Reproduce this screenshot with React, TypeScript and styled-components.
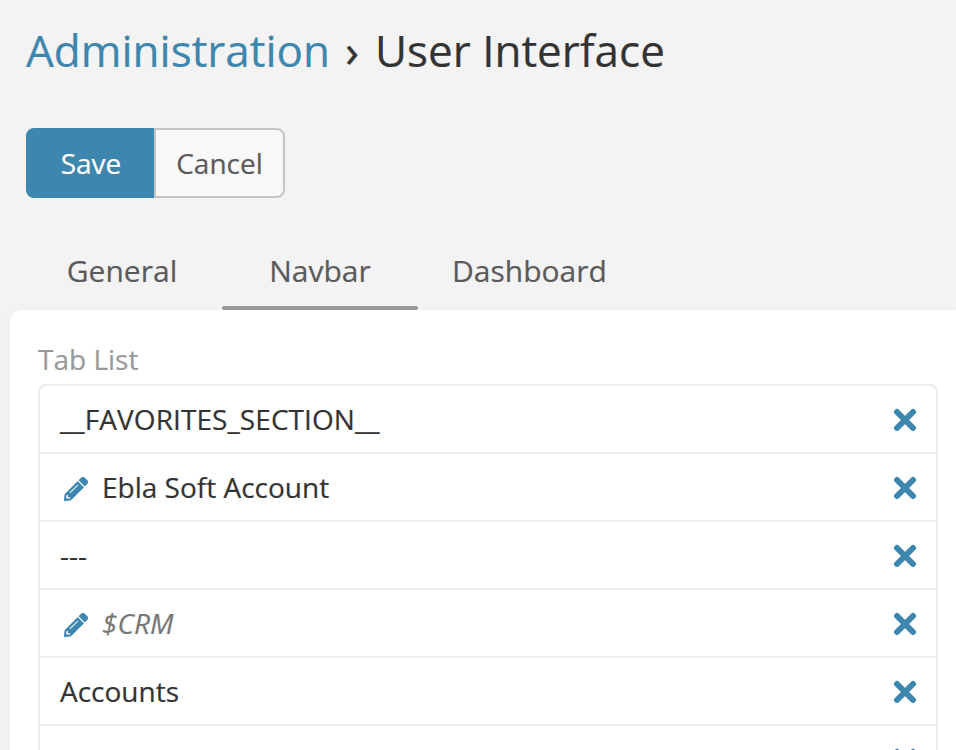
import React from 'react';
import styled, { createGlobalStyle } from 'styled-components';
import { FaPencilAlt } from 'react-icons/fa';

const GlobalStyle = createGlobalStyle`
  *, *::before, *::after { box-sizing: border-box; }
  html, body { margin: 0; height: 100%; overflow: hidden; }
  body {
    background: #f3f3f3;
    color: #333;
    font-family: 'Open Sans', sans-serif;
    font-size: 28px;
    line-height: 40px;
    -webkit-text-stroke: 0.2px currentColor;
  }
`;

const Page = styled.div`
  height: 750px;
  overflow: hidden;
  display: flex;
  flex-direction: column;
`;

const Title = styled.h1`
  flex: none;
  margin: 19px 0 0 26px;
  height: 63px;
  display: flex;
  font-size: 44px;
  font-weight: 400;
  line-height: 62px;
  white-space: pre;
`;

const Crumb = styled.a`
  color: #3d86ad;
  width: 303px;
`;

const Chevron = styled.span`
  width: 46px;
  text-align: center;
  -webkit-text-stroke-width: 0.6px;
`;

const Current = styled.span``;

const ButtonGroup = styled.div`
  flex: none;
  display: flex;
  margin: 46px 0 0 26px;
`;

const Button = styled.button<{ $primary?: boolean }>`
  width: ${(p) => (p.$primary ? 128 : 131)}px;
  height: 70px;
  padding: ${(p) => (p.$primary ? '0 0 0 2px' : '0')};
  font: inherit;
  color: ${(p) => (p.$primary ? '#fff' : '#5a5a5a')};
  background: ${(p) => (p.$primary ? '#3d86ad' : '#f8f8f8')};
  border: 2px solid ${(p) => (p.$primary ? '#3d86ad' : '#c5c5c5')};
  border-radius: ${(p) => (p.$primary ? '8px 0 0 8px' : '0 8px 8px 0')};
`;

const Tabs = styled.div`
  flex: none;
  display: flex;
  gap: 2px;
  margin: 36px 0 0 24px;
`;

const Tab = styled.div<{ $active?: boolean }>`
  min-width: 196px;
  height: 76px;
  padding: 16px 32px 0;
  font-size: 30px;
  line-height: 42px;
  text-align: center;
  color: #5a5a5a;
  position: relative;

  &::after {
    content: '';
    display: ${(p) => (p.$active ? 'block' : 'none')};
    position: absolute;
    inset: auto 0 0 0;
    height: 4px;
    border-radius: 2px;
    background: #999;
  }
`;

const Panel = styled.section`
  flex: 1 0 440px;
  margin-left: 10px;
  padding: 29px 18px 0 28px;
  background: #fff;
  border-top-left-radius: 12px;
  box-shadow: 0 0 6px rgba(0, 0, 0, 0.03);
`;

const Label = styled.div`
  color: #999;
  height: 45px;
`;

const List = styled.ul`
  list-style: none;
  margin: 0;
  padding: 0;
  width: 900px;
  border: 2px solid #e8eded;
  border-radius: 8px;
`;

const Row = styled.li`
  display: flex;
  align-items: center;
  height: 68px;
  padding: 0 19px 0 20px;
  border-bottom: 2px solid #e8eded;
`;

const Pencil = styled(FaPencilAlt)`
  width: 24px;
  height: 24px;
  margin: 4px 14px 0 4px;
  color: #3d86ad;
  stroke-width: 10;
`;

const Name = styled.span<{ $group?: boolean; $constant?: boolean }>`
  flex: 1;
  color: ${(p) => (p.$group ? '#777' : '#333')};
  font-style: ${(p) => (p.$group ? 'italic' : 'normal')};
  letter-spacing: ${(p) => (p.$constant ? '0.08px' : 'normal')};
`;

const RemoveIcon = styled.svg`
  width: 24px;
  height: 24px;
  margin-top: 2px;
  stroke: #3d86ad;
  stroke-width: 6;
  stroke-linecap: round;
`;

type Item = {
  name: string;
  editable?: boolean;
  group?: boolean;
  constant?: boolean;
};

const items: Item[] = [
  { name: '__FAVORITES_SECTION__', constant: true },
  { name: 'Ebla Soft Account', editable: true },
  { name: '---' },
  { name: '$CRM', editable: true, group: true },
  { name: 'Accounts' },
  { name: '' },
];

export default function App() {
  return (
    <Page>
      <GlobalStyle />
      <Title>
        <Crumb>Administration</Crumb>
        <Chevron>›</Chevron>
        <Current>User Interface</Current>
      </Title>
      <ButtonGroup>
        <Button $primary>Save</Button>
        <Button>Cancel</Button>
      </ButtonGroup>
      <Tabs>
        <Tab>General</Tab>
        <Tab $active>Navbar</Tab>
        <Tab>Dashboard</Tab>
      </Tabs>
      <Panel>
        <Label>Tab List</Label>
        <List>
          {items.map((item) => (
            <Row key={item.name}>
              {item.editable && <Pencil />}
              <Name $group={item.group} $constant={item.constant}>
                {item.name}
              </Name>
              <RemoveIcon viewBox="0 0 24 24">
                <path d="M4 4L20 20M20 4L4 20" />
              </RemoveIcon>
            </Row>
          ))}
        </List>
      </Panel>
    </Page>
  );
}
